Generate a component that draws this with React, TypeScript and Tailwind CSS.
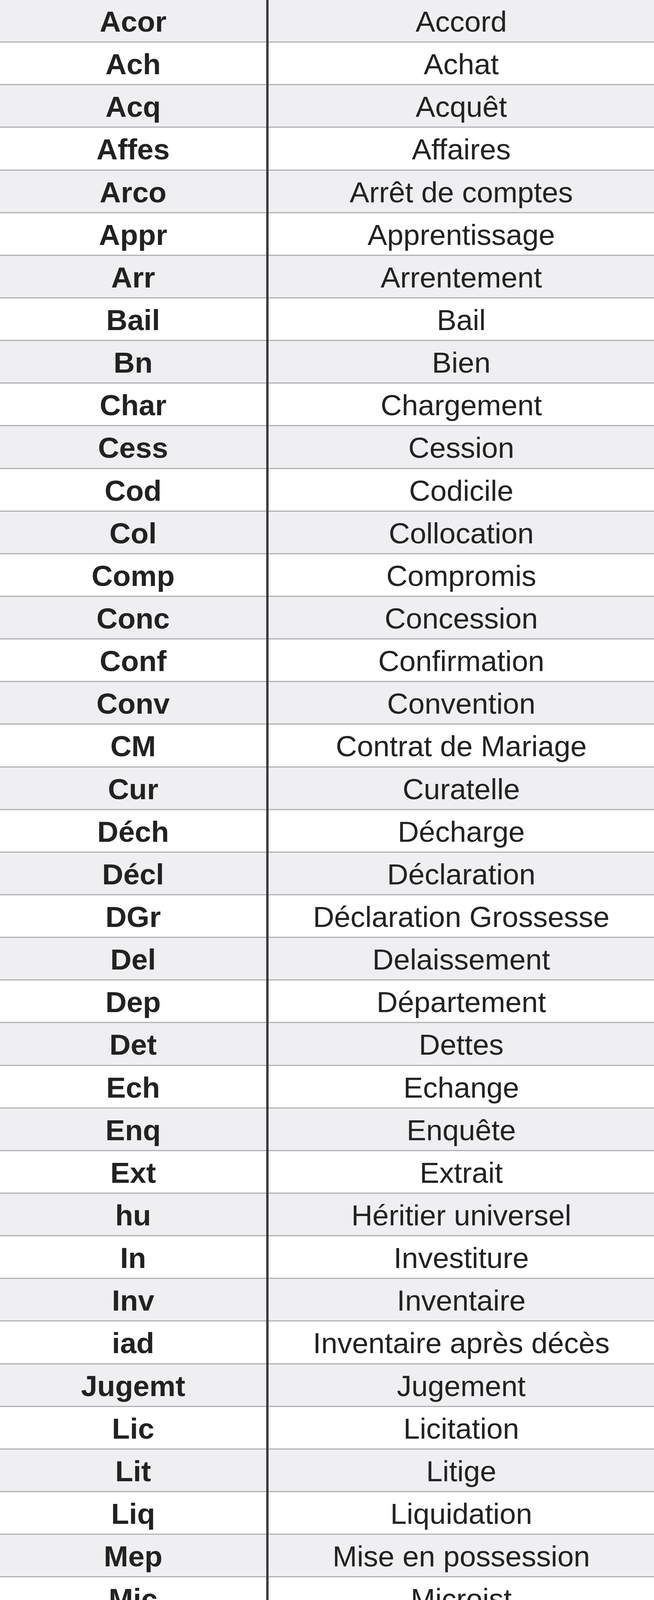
const rows: [string, string][] = [
  ['Acor', 'Accord'],
  ['Ach', 'Achat'],
  ['Acq', 'Acquêt'],
  ['Affes', 'Affaires'],
  ['Arco', 'Arrêt de comptes'],
  ['Appr', 'Apprentissage'],
  ['Arr', 'Arrentement'],
  ['Bail', 'Bail'],
  ['Bn', 'Bien'],
  ['Char', 'Chargement'],
  ['Cess', 'Cession'],
  ['Cod', 'Codicile'],
  ['Col', 'Collocation'],
  ['Comp', 'Compromis'],
  ['Conc', 'Concession'],
  ['Conf', 'Confirmation'],
  ['Conv', 'Convention'],
  ['CM', 'Contrat de Mariage'],
  ['Cur', 'Curatelle'],
  ['Déch', 'Décharge'],
  ['Décl', 'Déclaration'],
  ['DGr', 'Déclaration Grossesse'],
  ['Del', 'Delaissement'],
  ['Dep', 'Département'],
  ['Det', 'Dettes'],
  ['Ech', 'Echange'],
  ['Enq', 'Enquête'],
  ['Ext', 'Extrait'],
  ['hu', 'Héritier universel'],
  ['In', 'Investiture'],
  ['Inv', 'Inventaire'],
  ['iad', 'Inventaire après décès'],
  ['Jugemt', 'Jugement'],
  ['Lic', 'Licitation'],
  ['Lit', 'Litige'],
  ['Liq', 'Liquidation'],
  ['Mep', 'Mise en possession'],
  ['Mic', 'Microist'],
  ['Nom', 'Nomination'],
  ['Obl', 'Obligation'],
  ['Part', 'Partage'],
  ['PD', 'Partage et Division'],
  ['Pach', 'Pache'],
  ['PM', 'Promesse de Mariage'],
  ['Pens', 'Pension'],
  ['Proc', 'Procuration'],
  ['Prol', 'Prolongation'],
  ['Prom', 'Promotion'],
  ['Prot', 'Protestation'],
  ['Q', 'Quittance'],
  ['Rat', 'Rattification'],
  ['Rap', 'Rapport'],
  ['RCM', 'Résiliation CM'],
  ['Rec', 'Reconnaissance'],
  ['Rem', 'Rémission'],
  ['Rent', 'Rente'],
  ['Rep', 'Reprise'],
  ['Res', 'Résilliation'],
  ['Rev', 'Révision'],
  ['Revo', 'Révocation'],
  ['Sent', 'Sentence'],
  ['Sep', 'Séparation'],
  ['Som', 'Sommation'],
  ['ssp', 'Sous seing privé'],
  ['Suc', 'Succession'],
  ['test ou ttt', 'Testament'],
  ['TR', 'Testament réciproque'],
  ['Tran', 'Transaction'],
  ['Trai', 'Traité'],
  ['Tut', 'Tutelle'],
  ['Vte', 'Vente'],
];

// one table cell; odd rows (1st, 3rd...) are light grey
const Cell = ({ text, bold, index }: { text: string; bold?: boolean; index: number }) => (
  <div
    className={`h-[109.15px] shrink-0 border-b-[3px] border-[#b2b2b4] flex items-center justify-center pt-[5px] whitespace-nowrap ${
      index % 2 === 0 ? 'bg-[#efeff1]' : 'bg-white'
    } ${bold ? 'font-bold' : 'font-normal'}`}
  >
    {text}
  </div>
);

export default function App() {
  return (
    <div className="w-[1673px] flex bg-white text-[#222222] text-[75px] leading-none font-['Liberation_Sans',Arial,sans-serif]">
      <div className="w-[681px] flex flex-col">
        {rows.map(([abbr], i) => (
          <Cell key={abbr} text={abbr} bold index={i} />
        ))}
      </div>
      <div className="w-[6px] bg-[#3b3b3d]" />
      <div className="flex-1 flex flex-col">
        {rows.map(([abbr, full], i) => (
          <Cell key={abbr} text={full} index={i} />
        ))}
      </div>
    </div>
  );
}
